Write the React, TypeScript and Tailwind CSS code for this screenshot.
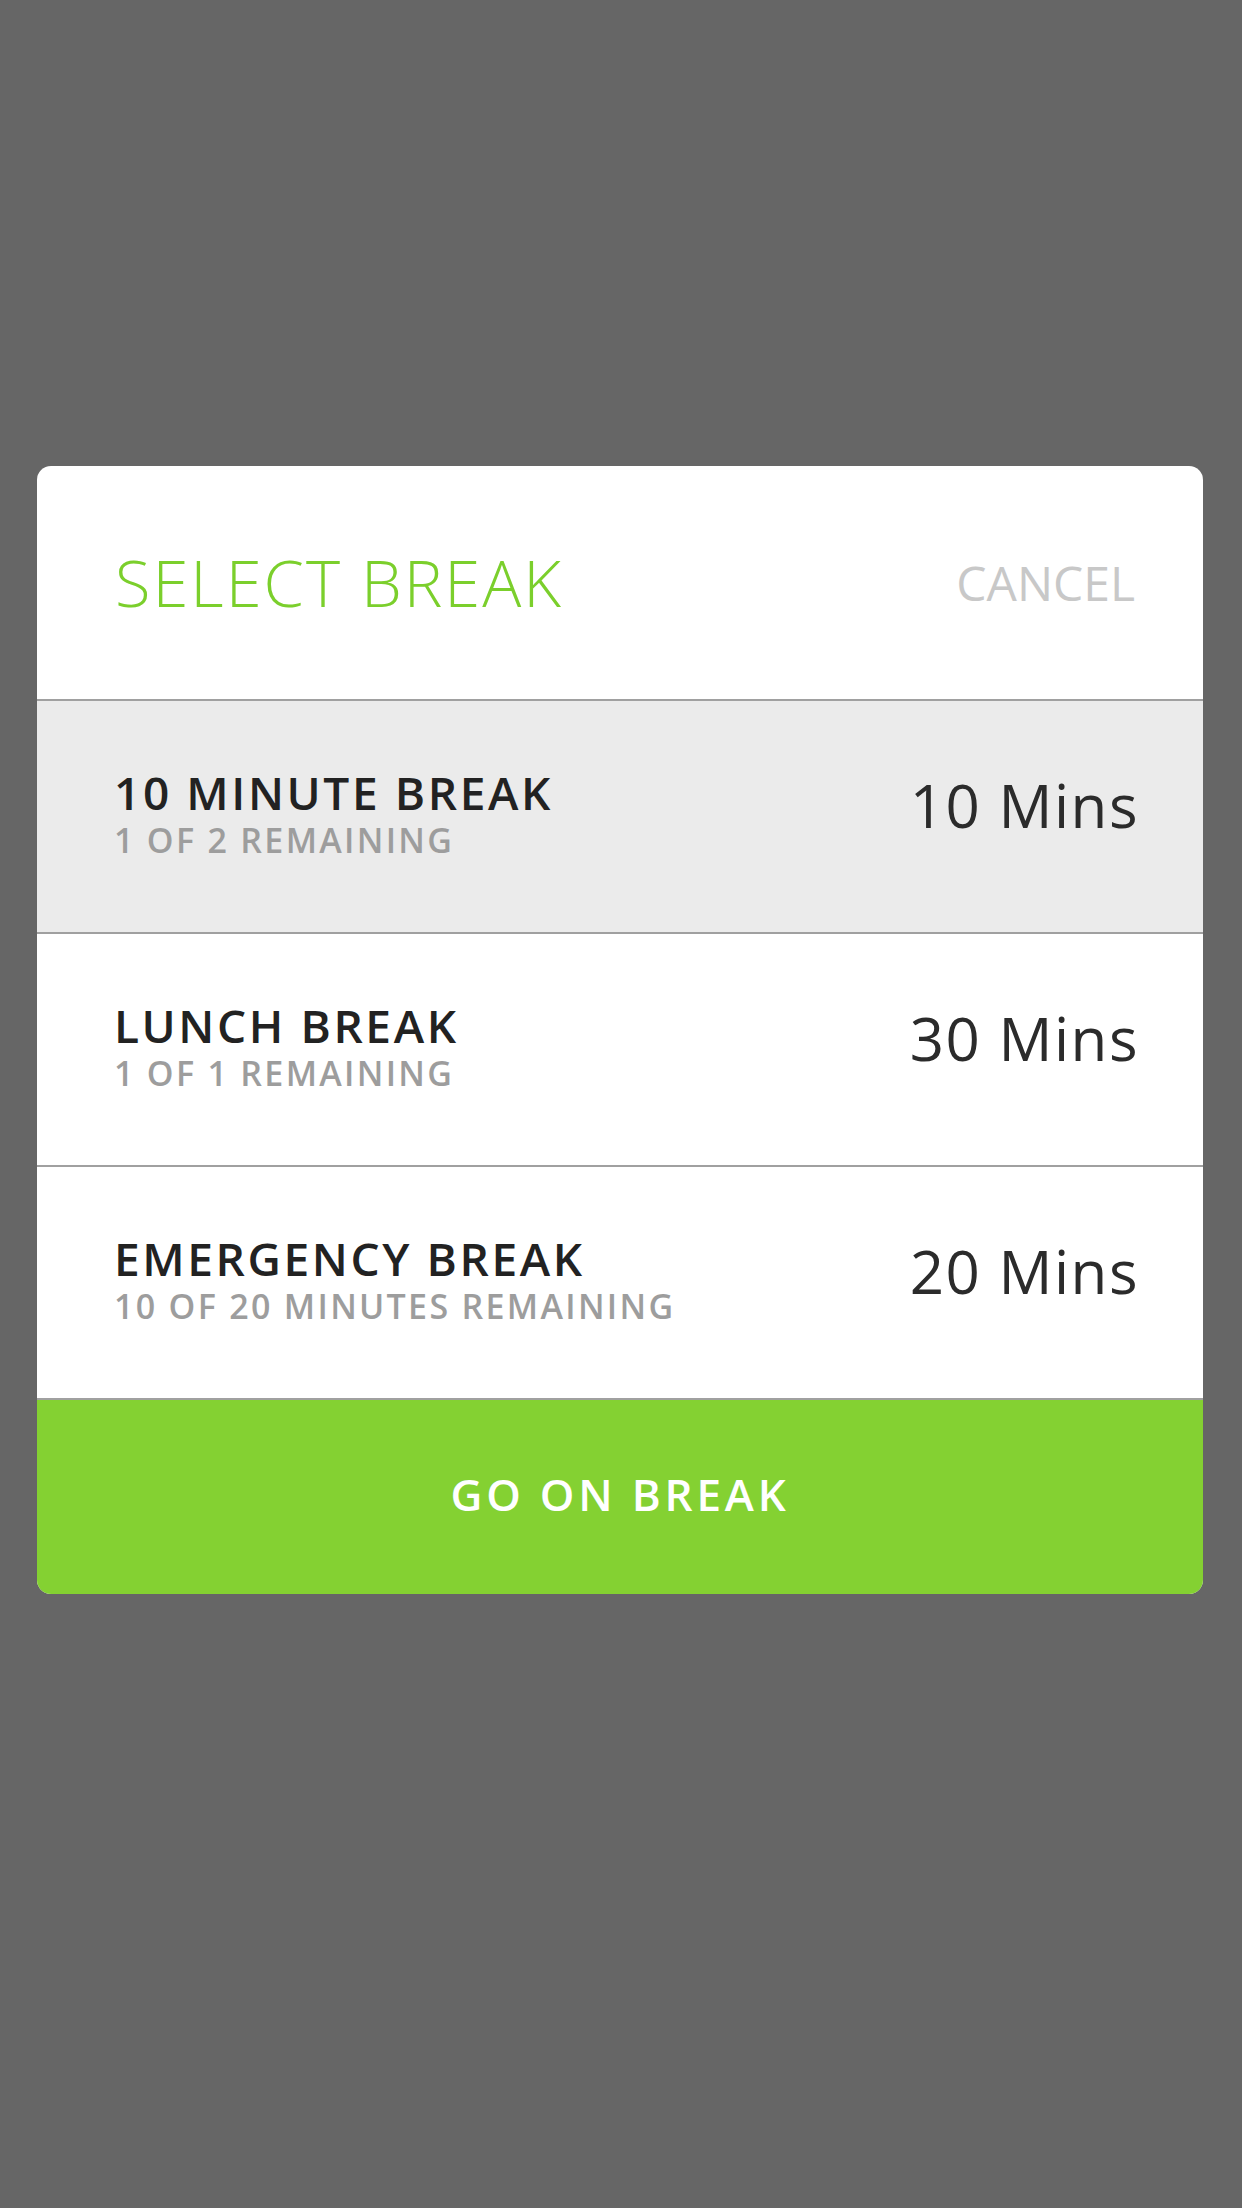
import React from "react";

const font = { fontFamily: '"Open Sans", "Noto Sans", sans-serif' };

type Row = { title: string; sub: string; mins: string; selected?: boolean };

const rows: Row[] = [
  { title: "10 MINUTE BREAK", sub: "1 OF 2 REMAINING", mins: "10 Mins", selected: true },
  { title: "LUNCH BREAK", sub: "1 OF 1 REMAINING", mins: "30 Mins" },
  { title: "EMERGENCY BREAK", sub: "10 OF 20 MINUTES REMAINING", mins: "20 Mins" },
];

export default function App() {
  return (
    <div className="min-h-screen w-full bg-[#666666] pt-[466px]" style={font}>
      <div className="ml-[37px] w-[1166px] rounded-[14px] overflow-hidden bg-white">
        <div className="h-[233px] flex items-center justify-between pl-[78px] pr-[68px]">
          <span className="text-[65px] leading-[65px] font-light tracking-[2px] text-[#7bcf2c]">
            SELECT BREAK
          </span>
          <span className="text-[48px] leading-[48px] text-[#c8c8c8]">CANCEL</span>
        </div>
        {rows.map((r) => (
          <div
            key={r.title}
            className={`h-[233px] border-t-2 border-[#a0a0a0] flex items-center justify-between pl-[77px] pr-[64px] ${
              r.selected ? "bg-[#ebebeb]" : "bg-white"
            }`}
          >
            <div className="flex flex-col pb-[8px]">
              <span className="text-[46px] leading-[46px] font-semibold tracking-[2.6px] text-[#222222]">
                {r.title}
              </span>
              <span className="mt-[8px] text-[34px] leading-[34px] font-semibold tracking-[2.3px] text-[#9d9d9d]">
                {r.sub}
              </span>
            </div>
            <span className="pb-[24px] text-[60px] leading-[60px] tracking-[1.5px] text-[#2b2b2b]">
              {r.mins}
            </span>
          </div>
        ))}
        <div className="h-[196px] border-t-2 border-[#a0a0a0] bg-[#84d132] flex items-center justify-center pb-[6px]">
          <span className="text-[44px] leading-[44px] font-semibold tracking-[3.8px] text-white">
            GO ON BREAK
          </span>
        </div>
      </div>
    </div>
  );
}
